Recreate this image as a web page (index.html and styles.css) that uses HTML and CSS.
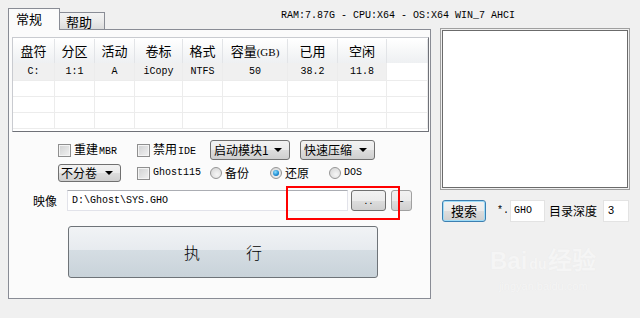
FILE: index.html
```html
<!DOCTYPE html>
<html lang="zh-CN">

<head>
    <meta charset="UTF-8">
    <meta name="viewport" content="width=device-width, initial-scale=1.0">
    <title>Ghost</title>
    <link rel="stylesheet" href="styles.css">
</head>

<body>
    <div class="window">
        <div class="top">
            <div class="tab active">常规</div>
            <div class="tab">帮助</div>
            <div class="sysinfo">RAM:7.87G - CPU:X64 - OS:X64 WIN_7 AHCI</div>
        </div>
        <div class="main">
            <div class="page">
                <div class="listview">
                    <div class="lv-row lv-head">
                        <div>盘符</div>
                        <div>分区</div>
                        <div>活动</div>
                        <div>卷标</div>
                        <div>格式</div>
                        <div>容量<span class="paren">(GB)</span></div>
                        <div>已用</div>
                        <div>空闲</div>
                        <div></div>
                    </div>
                    <div class="lv-row lv-data">
                        <div>C:</div>
                        <div>1:1</div>
                        <div>A</div>
                        <div>iCopy</div>
                        <div>NTFS</div>
                        <div>50</div>
                        <div>38.2</div>
                        <div>11.8</div>
                        <div class="blank"></div>
                    </div>
                    <div class="lv-row lv-empty"><div></div><div></div><div></div><div></div><div></div><div></div><div></div><div></div><div></div></div>
                    <div class="lv-row lv-empty"><div></div><div></div><div></div><div></div><div></div><div></div><div></div><div></div><div></div></div>
                    <div class="lv-row lv-empty"><div></div><div></div><div></div><div></div><div></div><div></div><div></div><div></div><div></div></div>
                </div>

                <div class="opt-row row1">
                    <label class="check w79"><span class="box"></span><span class="txt">重建<span class="mono">MBR</span></span></label>
                    <label class="check w73"><span class="box"></span><span class="txt">禁用<span class="mono">IDE</span></span></label>
                    <div class="combo w80">启动模块1<span class="arrow"></span></div>
                    <div class="combo w75">快速压缩<span class="arrow"></span></div>
                </div>
                <div class="opt-row row2">
                    <div class="combo small w63">不分卷<span class="arrow"></span></div>
                    <label class="check w73"><span class="box"></span><span class="txt mono">Ghost115</span></label>
                    <label class="radio w60"><span class="dot"></span><span class="txt">备份</span></label>
                    <label class="radio w59"><span class="dot on"></span><span class="txt">还原</span></label>
                    <label class="radio"><span class="dot"></span><span class="txt mono">DOS</span></label>
                </div>
                <div class="opt-row row3">
                    <span class="label">映像</span>
                    <div class="textbox path mono">D:\Ghost\SYS.GHO</div>
                    <div class="btn dots">. .</div>
                    <div class="btn minus">-</div>
                </div>
                <div class="run">
                    <div class="run-btn"><span>执</span><span>行</span></div>
                </div>
            </div>

            <div class="side">
                <div class="results"></div>
                <div class="search">
                    <div class="btn search-btn">搜索</div>
                    <span class="star mono">*.</span>
                    <div class="textbox ext mono">GHO</div>
                    <span class="depth">目录深度</span>
                    <div class="textbox num">3</div>
                </div>
            </div>
        </div>

        <div class="mark-box"></div>
        <div class="watermark">
            <div class="wm-logo">Bai<span class="paw">du</span>经验</div>
            <div class="wm-url">jingyan.baidu.com</div>
        </div>
    </div>
</body>

</html>
```

FILE: styles.css
```css
* {
    margin: 0;
    padding: 0;
    box-sizing: border-box;
}

body {
    background-color: #f0f0f0;
    font-family: "Noto Sans CJK SC", "Liberation Sans", sans-serif;
    font-size: 12px;
    line-height: 14px;
    color: #000;
}

.mono {
    font-family: "Liberation Mono", "DejaVu Sans Mono", monospace;
    font-size: 10px;
}

.window {
    position: relative;
    width: 640px;
    height: 318px;
    padding: 8px 0 0 8px;
}

/* tabs + system info */
.top {
    display: flex;
    align-items: flex-end;
    height: 21px;
}

.tab {
    height: 17px;
    width: 46px;
    margin-left: -1px;
    padding: 1px 0 0 6px;
    border: 1px solid #898c95;
    border-bottom: none;
    background: linear-gradient(#f3f3f3, #ebebeb 50%, #dcdcdc);
    font-size: 13px;
    line-height: 15px;
}

.tab.active {
    position: relative;
    z-index: 1;
    width: 52px;
    height: 22px;
    margin-left: 0;
    margin-bottom: -1px;
    padding: 2px 0 0 7px;
    background: #fbfbfb;
}

.sysinfo {
    align-self: flex-start;
    margin: 2px 0 0 176px;
    font-family: "Liberation Mono", monospace;
    font-size: 10px;
    line-height: 12px;
    white-space: nowrap;
}

.main {
    display: flex;
}

/* left tab page */
.page {
    width: 423px;
    height: 270px;
    border: 1px solid #898c95;
    background-color: #fbfbfb;
    padding-top: 7px;
}

.listview {
    height: 95px;
    margin: 0 1px 0 3px;
    border: 1px solid #828790;
    border-color: #c9cbd0 #6f7178 #6f7178 #c9cbd0;
    background-color: #fff;
    overflow: hidden;
    padding-top: 1px;
}

.lv-row {
    display: grid;
    grid-template-columns: 42px 40px 40px 48px 40px 65px 50px 49px 1fr;
}

.lv-row div {
    border-right: 1px solid #ececec;
    text-align: center;
    white-space: nowrap;
}

.lv-head div {
    height: 24px;
    line-height: 24px;
    font-size: 13px;
    background: linear-gradient(#ffffff, #f7f8f9 45%, #eef0f2);
    border-right-color: #e2e4e7;
}

.lv-head .paren {
    font-family: "Liberation Serif", serif;
    font-size: 11px;
}

.lv-data div {
    height: 18px;
    line-height: 18px;
    background-color: #f0f0f0;
    border-bottom: 1px solid #ececec;
    font-family: "Liberation Mono", monospace;
    font-size: 10px;
}

.lv-data div.blank {
    background-color: #fff;
}

.lv-empty div {
    height: 16px;
    border-bottom: 1px solid #ececec;
}

/* options */
.opt-row {
    display: flex;
    align-items: center;
    white-space: nowrap;
}

.row1 {
    height: 20px;
    margin: 8px 0 0 49px;
}

.row2 {
    height: 18px;
    margin: 4px 0 0 49px;
}

.row3 {
    height: 21px;
    margin: 8px 0 0 24px;
}

.w79 { width: 79px; }
.w73 { width: 73px; }
.w80 { width: 80px; }
.w75 { width: 75px; margin-left: 10px; }
.w63 { width: 63px; margin-right: 16px; }
.w60 { width: 60px; }
.w59 { width: 59px; }

.check,
.radio {
    display: flex;
    align-items: center;
    font-size: 12px;
}

.txt {
    line-height: 14px;
}

.txt .mono {
    margin-left: 1px;
}

.box {
    width: 13px;
    height: 13px;
    margin-right: 3px;
    border: 1px solid #8f8f8f;
    background: linear-gradient(135deg, #cfd0d1, #f2f2f2);
    box-shadow: inset 0 0 0 1px #f4f4f4;
}

.dot {
    position: relative;
    width: 12px;
    height: 12px;
    margin-right: 3px;
    border: 1px solid #959595;
    border-radius: 50%;
    background: radial-gradient(circle at 60% 65%, #f6f6f6, #d2d2d2);
}

.dot.on::after {
    content: "";
    position: absolute;
    left: 2px;
    top: 2px;
    width: 6px;
    height: 6px;
    border-radius: 50%;
    background: radial-gradient(circle at 40% 35%, #8fe0ff, #1b8ad1 60%, #0c4d8a);
}

.combo {
    position: relative;
    height: 20px;
    padding: 0 0 0 3px;
    border: 1px solid #707070;
    border-radius: 3px;
    background: linear-gradient(#f2f2f2, #ebebeb 50%, #dddddd 51%, #cfcfcf);
    font-size: 12px;
    line-height: 18px;
}

.combo.small {
    height: 18px;
    line-height: 16px;
    padding-left: 2px;
}

.arrow {
    position: absolute;
    right: 7px;
    top: 7px;
    border-left: 4px solid transparent;
    border-right: 4px solid transparent;
    border-top: 4px solid #000;
}

.combo.small .arrow {
    top: 6px;
}

.label {
    width: 34px;
    font-size: 12px;
}

.textbox {
    height: 21px;
    border: 1px solid #e2e3ea;
    border-top-color: #abadb3;
    background-color: #fff;
    line-height: 19px;
}

.path {
    width: 281px;
    padding-left: 4px;
}

.btn {
    height: 21px;
    border: 1px solid #707070;
    border-radius: 3px;
    background: linear-gradient(#f2f2f2, #ebebeb 50%, #dddddd 51%, #cfcfcf);
    text-align: center;
    line-height: 18px;
}

.dots {
    width: 35px;
    margin-left: 3px;
    font-size: 10px;
}

.minus {
    width: 21px;
    margin-left: 5px;
    border-color: #a0a0a0;
}

.run {
    margin: 15px 0 0 59px;
}

.run-btn {
    display: flex;
    justify-content: center;
    align-items: center;
    gap: 46px;
    width: 310px;
    height: 52px;
    border: 1px solid #6e7378;
    border-radius: 3px;
    background: linear-gradient(#f1f3f5, #e7ebef 45%, #d5dde3 46%, #c9d3da);
    font-size: 16px;
    font-weight: 300;
}

/* right column */
.side {
    width: 190px;
    margin-left: 9px;
}

.results {
    height: 162px;
    margin-top: -1px;
    border: 1px solid #a0a0a0;
    background-color: #fff;
    box-shadow: inset 0 0 0 1px #f0f0f0, inset 0 0 0 2px #6b6b6b;
}

.search {
    display: flex;
    align-items: center;
    height: 22px;
    margin-top: 10px;
    white-space: nowrap;
}

.search-btn {
    width: 44px;
    height: 22px;
    margin-left: 2px;
    border-color: #3c7fb1;
    box-shadow: inset 0 0 0 1px #9fdcf7;
    font-size: 13px;
    line-height: 19px;
}

.star {
    margin-left: 11px;
    width: 13px;
}

.ext {
    width: 35px;
    height: 22px;
    padding-left: 3px;
    border-color: #e3e3e3;
}

.depth {
    margin-left: 4px;
    width: 54px;
    font-size: 12px;
}

.num {
    width: 26px;
    height: 22px;
    padding-left: 4px;
    border-color: #e3e3e3;
    font-family: "Liberation Sans", sans-serif;
    font-size: 11px;
}

/* annotation overlay */
.mark-box {
    position: absolute;
    left: 286px;
    top: 186px;
    width: 114px;
    height: 34px;
    border: 2px solid #f00;
}

.watermark {
    position: absolute;
    left: 490px;
    top: 246px;
    color: #f5f5f5;
    text-shadow: 0 0 1px #e8e8e8;
    text-align: center;
}

.wm-logo {
    font-family: "Liberation Sans", sans-serif;
    font-size: 24px;
    font-weight: bold;
    line-height: 30px;
}

.wm-logo .paw {
    font-size: 14px;
    margin: 0 2px;
}

.wm-url {
    font-family: "Liberation Sans", sans-serif;
    font-size: 11px;
    line-height: 14px;
}
```
